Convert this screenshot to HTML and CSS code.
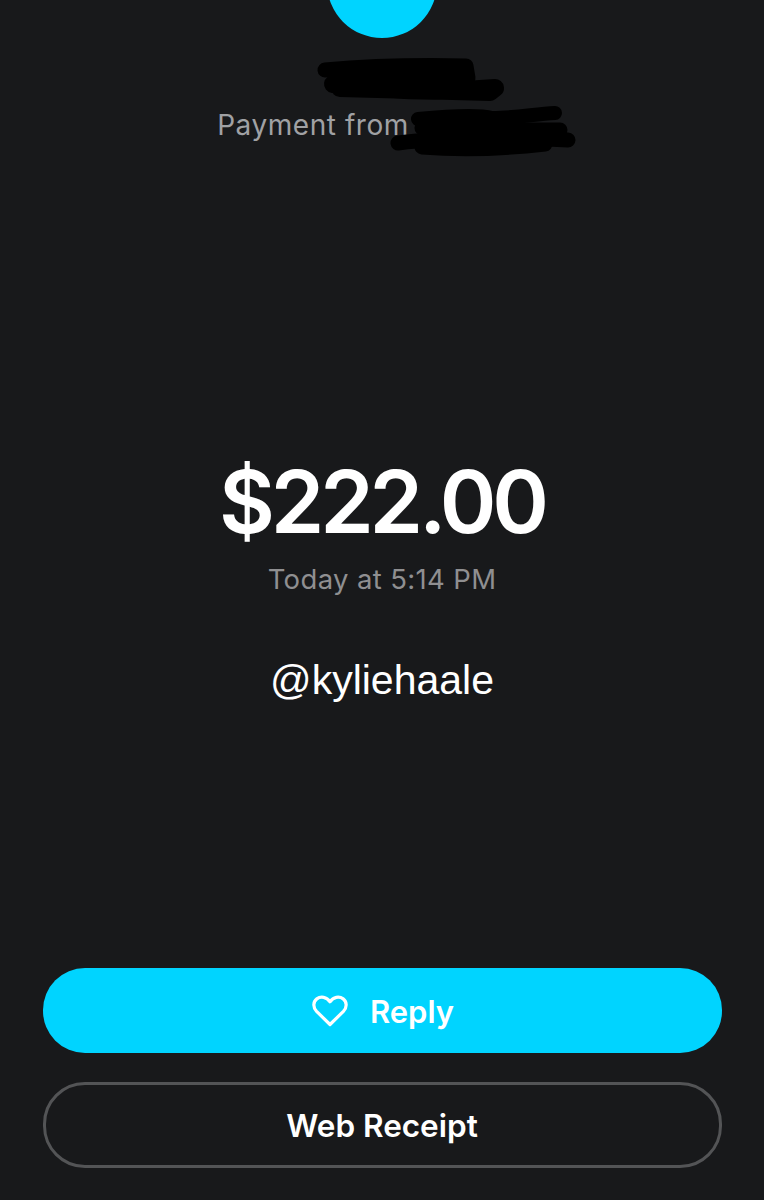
FILE: index.html
```html
<!DOCTYPE html>
<html lang="en">
<head>
  <meta charset="UTF-8" />
  <meta name="viewport" content="width=device-width, initial-scale=1" />
  <title>Payment</title>
  <link rel="stylesheet" href="styles.css">
</head>
<body>
  <div class="screen">
    <div class="sender">
      <div class="avatar"></div>
      <div class="sender-name"></div>
      <div class="payment-from">Payment from <span class="hidden-name"></span></div>
      <!-- scribbled out names -->
      <svg class="scribble" width="764" height="170" viewBox="0 0 764 170" fill="none" stroke="#000" stroke-linecap="round" stroke-linejoin="round">
        <path d="M325 70 C370 66 420 65 466 66 L468 78 L340 78" stroke-width="15" />
        <path d="M333 84 C380 90 440 93 495 88 L490 92 L340 88" stroke-width="18" />
        <path d="M418 119 C450 116 480 115 492 118 C515 118 535 114 555 113" stroke-width="14" />
        <path d="M422 128 C470 130 520 130 560 130" stroke-width="15" />
        <path d="M398 143 C450 136 520 138 568 140" stroke-width="15" />
        <path d="M422 147 C470 151 510 148 545 144" stroke-width="15" />
      </svg>
    </div>

    <div class="details">
      <div class="amount">$222.00</div>
      <div class="timestamp">Today at 5:14 PM</div>
      <div class="cashtag">@kyliehaale</div>
    </div>

    <div class="actions">
      <div class="btn btn-primary">
        <svg class="heart" width="36" height="32" viewBox="0 0 36 32" fill="none" stroke="#fff" stroke-width="3.2" stroke-linejoin="round">
          <path d="M18 29.5 L4.6 16.4 C0.6 12.3 1.2 6.6 4.8 3.9 C8.8 1 14.6 1.8 18 6.8 C21.4 1.8 27.2 1 31.2 3.9 C34.8 6.6 35.4 12.3 31.4 16.4 Z" />
        </svg>
        <span>Reply</span>
      </div>
      <div class="btn btn-outline">Web Receipt</div>
    </div>
  </div>
</body>
</html>
```

FILE: styles.css
```css
html, body {
  margin: 0;
  padding: 0;
  background-color: #18191b;
  font-family: 'Inter', 'Liberation Sans', sans-serif;
  overflow: hidden;
}

.screen {
  height: 1200px;
  box-sizing: border-box;
  display: flex;
  flex-direction: column;
  align-items: center;
  padding-bottom: 32px;
}

.sender {
  display: flex;
  flex-direction: column;
  align-items: center;
  width: 100%;
}

.avatar {
  width: 110px;
  height: 110px;
  margin-top: -72px;
  border-radius: 50%;
  background-color: #00d4ff;
}

.sender-name {
  height: 66px;
}

.payment-from {
  display: flex;
  gap: 8px;
  font-size: 28px;
  line-height: 42px;
  letter-spacing: 0.55px;
  color: #a0a1a4;
  white-space: nowrap;
}

.hidden-name {
  display: block;
  width: 130px;
}

.scribble {
  position: absolute;
  top: 0;
  left: 0;
}

.details {
  display: flex;
  flex-direction: column;
  align-items: center;
  margin-top: 306px;
}

.amount {
  font-size: 86px;
  line-height: 100px;
  font-weight: 620;
  letter-spacing: -4.2px;
  color: #fff;
}

.timestamp {
  margin-top: 7px;
  font-size: 27.5px;
  line-height: 40px;
  letter-spacing: 0.35px;
  color: #8f8f91;
}

.cashtag {
  margin-top: 59px;
  font-family: 'Liberation Sans', sans-serif;
  font-size: 41px;
  line-height: 44px;
  color: #fff;
}

.actions {
  margin-top: auto;
  display: flex;
  flex-direction: column;
  gap: 29px;
  width: 679px;
}

.btn {
  height: 85px;
  box-sizing: border-box;
  display: flex;
  align-items: center;
  justify-content: center;
  border-radius: 42px;
  font-size: 31.5px;
  font-weight: 600;
  color: #fff;
}

.btn-primary {
  gap: 22px;
  padding: 1px 0 0 2px;
  font-size: 31px;
  background-color: #00d4ff;
}

.btn-outline {
  height: 86px;
  border: 3px solid #535456;
  background-color: transparent;
}
```
